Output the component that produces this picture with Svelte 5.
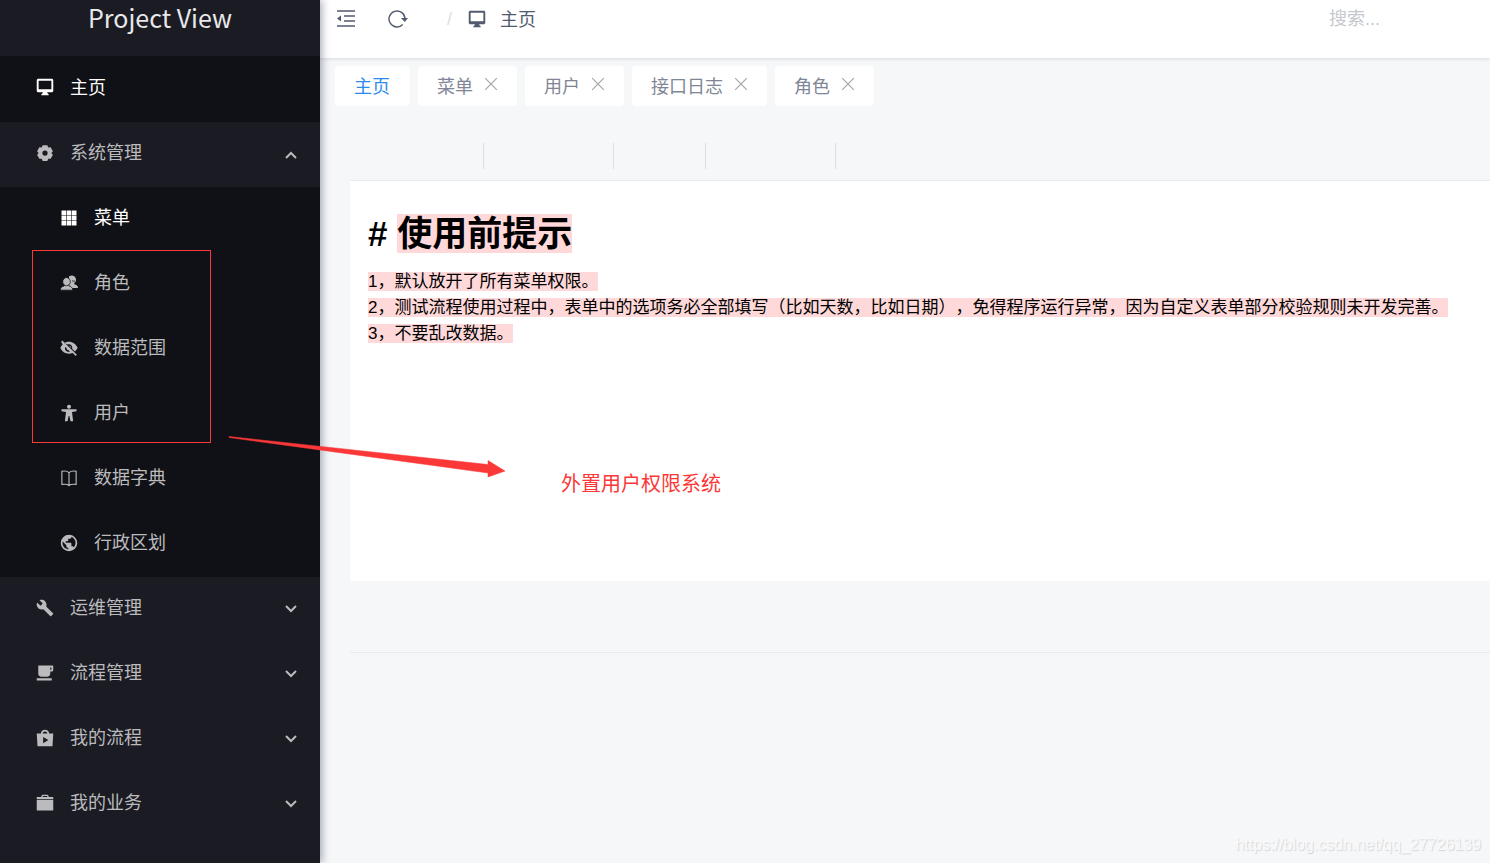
<script lang="ts">
	interface MenuItem {
		title: string;
		icon: string;
		active?: boolean;
		children?: MenuItem[];
	}

	interface Tab {
		title: string;
		closable: boolean;
	}

	const menu: MenuItem[] = [
		{
			title: '系统管理',
			icon: 'gear',
			children: [
				{ title: '菜单', icon: 'grid', active: true },
				{ title: '角色', icon: 'people' },
				{ title: '数据范围', icon: 'eyeOff' },
				{ title: '用户', icon: 'person' },
				{ title: '数据字典', icon: 'book' },
				{ title: '行政区划', icon: 'globe' }
			]
		},
		{ title: '运维管理', icon: 'wrench' },
		{ title: '流程管理', icon: 'cup' },
		{ title: '我的流程', icon: 'bag' },
		{ title: '我的业务', icon: 'briefcase' }
	];

	const icons: Record<string, string> = {
		monitor: 'M21 1H3C1.9 1 1 1.9 1 3v14c0 1.1.9 2 2 2h6v1l-2 2v1h10v-1l-2-2v-1h6c1.1 0 2-.9 2-2V3c0-1.1-.9-2-2-2zM3.500 3.500h17v11.500h-17z',
		gear: 'M9 1.500h6l1.500 3 3-.3 3 5.300-2 2.500 2 2.500-3 5.300-3-.3-1.500 3H9l-1.500-3-3 .3-3-5.300 2-2.500-2-2.500 3-5.300 3 .3zM12 8.500a3.500 3.500 0 1 0 0 7 3.500 3.500 0 0 0 0-7z',
		grid: 'M2 2h6v6H2zM8.800 2h6.400v6H8.800zM16 2h6v6h-6zM2 8.800h6v6.400H2zM8.800 8.800h6.400v6.400H8.800zM16 8.800h6v6.400h-6zM2 16h6v6H2zM8.800 16h6.400v6H8.800zM16 16h6v6h-6z',
		eyeOff: 'M5.500 5.300C8 3.800 10 3.500 12 3.500c5 0 9.500 3.500 11.500 8-.8 2-2 3.700-3.700 5l-3.600-3.600c1-4-2.700-6.700-5.700-5.700zM1.500 3.500L3 2l19.500 19L21 22.500l-4-3.700c-7 2.500-14 0-16.500-7 .7-1.800 1.700-3.200 3-4.500zM7 10.500c-1.500 4 2.500 7.500 6.200 6.300l-1.700-1.700c-1.800 0-3-1.500-2.800-3zM12 9c2 .2 3 1.500 3 3z',
		person: 'M12 1a2.700 2.700 0 1 1 0 5.400A2.700 2.700 0 0 1 12 1zM2 7h20v2.500l-6 1L17.500 23H14l-1.500-7h-1L10 23H6.500L8 10.500l-6-1z',
		globe: 'M12 1a11 11 0 1 0 0 22 11 11 0 0 0 0-22zM11 20.500c-4.400-.5-7.700-4.200-7.700-8.700l.3-1.800L8.500 15v1.200c0 1.200 1 2.200 2.500 2.200zm7.300-2.800c-.3-.9-1.100-1.500-2.100-1.500h-1v-3.300c0-.6-.5-1.100-1.100-1.100H7.600V9.600h2.200c.6 0 1.100-.5 1.100-1.100V6.300h2.200c1.200 0 2.200-1 2.200-2.200v-.4c3.200 1.300 5.400 4.500 5.400 8.100 0 2.300-.9 4.400-2.400 5.900z',
		wrench: 'M22.700 19l-9.100-9.100c.9-2.300.4-5-1.500-6.900-2-2-5-2.400-7.400-1.300L9 6 6 9 1.600 4.700C.4 7.100.9 10.100 2.900 12.100c1.900 1.900 4.600 2.400 6.900 1.500l9.100 9.100c.4.4 1 .4 1.400 0l2.300-2.300c.5-.4.5-1.100.1-1.400z',
		cup: 'M22 2H3v11c0 2.200 1.800 4 4 4h8c2.200 0 4-1.800 4-4v-3h2c1.100 0 2-.9 2-2V3c0-.6-.4-1-1-1zm-1.500 5.500H19V4.500h1.500zM1 19h20v3H1z',
		bag: 'M6.500 6C6.500 3 9 1 12 1s5.500 2 5.500 5H23l-1 17H2L1 6zm2.500 0h6c0-1.700-1.300-2.800-3-2.800S9 4.300 9 6zM9.500 10.500v8.500l7-4.250z',
		briefcase: 'M7 4c0-1.700.9-3 2-3h6c1.100 0 2 1.300 2 3h6v2.500H1V4zm2 0h6V2.700H9zM1 7.500h22V22H1z'
	};

	let tabs = $state<Tab[]>([
		{ title: '主页', closable: false },
		{ title: '菜单', closable: true },
		{ title: '用户', closable: true },
		{ title: '接口日志', closable: true },
		{ title: '角色', closable: true }
	]);
	let current = $state('主页');
	let opened = $state<Record<string, boolean>>({ 系统管理: true });
	let keyword = $state('');

	function closeTab(title: string) {
		tabs = tabs.filter((t) => t.title !== title);
		if (current === title) current = tabs[0].title;
	}
</script>

{#snippet icon(name: string)}
	<svg class="icon" viewBox="0 0 24 24" aria-hidden="true">
		{#if name === 'people'}
			<path d="M15.500 2a5.500 5.500 0 0 1 3.500 10v1.500c3 .5 5 2 5 5H12V3z" fill="currentColor" />
			<path
				d="M8.500 4.500a5.800 5.800 0 0 1 3.500 10v1.500c3 .5 5 2.500 5 5.500H.5c0-3 2-5 5-5.500v-1.500a5.800 5.800 0 0 1 3-10z"
				fill="currentColor"
				stroke="#101116"
			/>
			<path d="M5 14.500q3.500 2.500 7 0M16 9q3 1.500 4 0" fill="none" stroke="#101116" />
		{:else if name === 'book'}
			<path
				d="M12 5v17M12 5C10 2.500 6 2.500 2.500 3v17.500c4-.5 7.500-.5 9.500 1.500 2-2 5.500-2 9.500-1.500V3c-3.500-.5-7.500-.5-9.500 2z"
				fill="none"
				stroke="currentColor"
				stroke-width="1.500"
			/>
		{:else}
			<path d={icons[name]} fill="currentColor" fill-rule="evenodd" />
		{/if}
	</svg>
{/snippet}

<div class="layout">
	<aside class="sidebar">
		<div class="logo">Project View</div>
		<nav>
			<a class="menu-item home" href="#home">
				{@render icon('monitor')}
				<span>主页</span>
			</a>
			{#each menu as item}
				<button class="menu-item" onclick={() => (opened[item.title] = !opened[item.title])}>
					{@render icon(item.icon)}
					<span>{item.title}</span>
					<svg class="chevron" viewBox="0 0 14 14" aria-hidden="true">
						<path
							d={opened[item.title] ? 'M2 12l5-5 5 5' : 'M2 5l5 5 5-5'}
							fill="none"
							stroke="currentColor"
							stroke-width="2"
						/>
					</svg>
				</button>
				{#if item.children && opened[item.title]}
					<div class="submenu">
						{#each item.children as child}
							<a class="menu-item" class:active={child.active} href="#{child.icon}">
								{@render icon(child.icon)}
								<span>{child.title}</span>
							</a>
						{/each}
					</div>
				{/if}
			{/each}
		</nav>
	</aside>

	<div class="main">
		<header class="topbar">
			<button class="tool" aria-label="折叠菜单">
				<svg viewBox="0 0 20 20" aria-hidden="true">
					<path d="M1 2h18M8 7h11M8 12h11M1 17h18" fill="none" stroke="currentColor" stroke-width="1.600" />
					<path d="M1 9.500l4-3v6z" fill="currentColor" />
				</svg>
			</button>
			<button class="tool" aria-label="刷新">
				<svg viewBox="0 0 20 20" aria-hidden="true">
					<path d="M14.800 15.500A8 8 0 1 1 17 9.500" fill="none" stroke="currentColor" stroke-width="1.400" />
					<path d="M13 9h7l-3.200 4z" fill="currentColor" />
				</svg>
			</button>
			<div class="breadcrumb">
				<span class="slash">/</span>
				<a href="#home">
					{@render icon('monitor')}
					<span class="crumb">主页</span>
				</a>
			</div>
			<input class="search" type="text" placeholder="搜索..." aria-label="搜索" bind:value={keyword} />
		</header>

		<div class="tabs">
			{#each tabs as tab}
				<div class="tab" class:active={tab.title === current}>
					<button class="tab-title" onclick={() => (current = tab.title)}>{tab.title}</button>
					{#if tab.closable}
						<button class="tab-close" aria-label="关闭{tab.title}" onclick={() => closeTab(tab.title)}>
							<svg viewBox="0 0 12 12" aria-hidden="true">
								<path d="M0 0l12 12M12 0L0 12" fill="none" stroke="currentColor" stroke-width="1.200" />
							</svg>
						</button>
					{/if}
				</div>
			{/each}
		</div>

		<main class="content">
			<div class="steps">
				<div class="step wide"></div>
				<div class="step wide"></div>
				<div class="step"></div>
				<div class="step wide"></div>
			</div>
			<section class="card">
				<h1># <mark>使用前提示</mark></h1>
				<p>
					<mark>1，默认放开了所有菜单权限。</mark><br />
					<mark>2，测试流程使用过程中，表单中的选项务必全部填写（比如天数，比如日期），免得程序运行异常，因为自定义表单部分校验规则未开发完善。</mark><br />
					<mark>3，不要乱改数据。</mark>
				</p>
			</section>
			<div class="footer-line"></div>
		</main>
	</div>

	<!-- annotations -->
	<div class="note-box"></div>
	<svg class="note-arrow" viewBox="0 0 280 44" aria-hidden="true">
		<path d="M1 5.500L260 33.500V29.500L277 40 260 46V42L1 6.500z" fill="#fb3838" stroke="#fb3838" stroke-width="0.500" />
	</svg>
	<div class="note-text">外置用户权限系统</div>
	<div class="watermark">https://blog.csdn.net/qq_27726139</div>
</div>

<style>
	:global(body) {
		background: #f5f7f9;
		font-family: "Liberation Sans", "Noto Sans CJK SC", sans-serif;
		overflow: hidden;
	}

	button,
	input {
		font: inherit;
		border: 0;
		padding: 0;
		background: none;
		color: inherit;
		outline: none;
	}

	button {
		cursor: pointer;
	}

	a {
		color: inherit;
		text-decoration: none;
	}

	svg {
		display: block;
		flex: none;
	}

	.layout {
		position: relative;
		display: flex;
		min-height: 100vh;
		font-size: 18px;
	}

	/* Sidebar */
	.sidebar {
		position: relative;
		z-index: 2;
		flex: none;
		width: 320px;
		background: #1b1b24;
		box-shadow: 2px 0 8px rgba(0, 21, 41, 0.35);
	}

	.logo {
		height: 34px;
		padding-bottom: 22px;
		line-height: 34px;
		text-align: center;
		font-family: "Noto Sans CJK SC", sans-serif;
		font-size: 25px;
		color: #e8e8e9;
	}

	.menu-item {
		box-sizing: border-box;
		display: flex;
		align-items: center;
		gap: 16px;
		width: 100%;
		height: 65px;
		padding: 0 22px 4px 36px;
		color: #bbbbbd;
		text-align: left;
	}

	.menu-item span,
	.crumb {
		padding-bottom: 3px;
	}

	.menu-item.home {
		height: 66px;
		background: #101116;
		color: #fff;
	}

	.submenu {
		background: #101116;
	}

	.submenu .menu-item {
		padding-left: 60px;
	}

	.menu-item.active {
		color: #fff;
	}

	.icon {
		width: 18px;
		height: 18px;
	}

	.chevron {
		width: 14px;
		height: 14px;
		margin-left: auto;
	}

	/* Top bar */
	.main {
		flex: 1;
		min-width: 0;
	}

	.topbar {
		display: flex;
		align-items: center;
		height: 38px;
		padding: 0 20px 20px 16px;
		background: #fff;
		box-shadow: 0 1px 4px rgba(0, 21, 41, 0.12);
		color: #515a6e;
	}

	.tool {
		margin-right: 32px;
	}

	.tool svg {
		width: 20px;
		height: 20px;
	}

	.breadcrumb {
		display: flex;
		align-items: center;
		gap: 16px;
		margin-left: 7px;
	}

	.breadcrumb a {
		display: flex;
		align-items: center;
		gap: 14px;
	}

	.slash {
		color: #dcdee2;
	}

	.search {
		width: 141px;
		margin-left: auto;
	}

	.search::placeholder {
		color: #c5c8ce;
		opacity: 1;
	}

	/* Tabs */
	.tabs {
		display: flex;
		gap: 8px;
		padding: 8px 15px 0;
	}

	.tab {
		display: flex;
		align-items: center;
		gap: 12px;
		height: 40px;
		padding: 0 20px 0 19px;
		border-radius: 4px;
		background: #fff;
		color: #808695;
	}

	.tab.active {
		color: #2d8cf0;
	}

	.tab-title {
		padding-bottom: 3px;
	}

	.tab-close {
		padding-bottom: 4px;
		color: #a6a6a6;
	}

	.tab-close svg {
		width: 12px;
		height: 12px;
	}

	/* Content */
	.content {
		padding: 37px 0 0 30px;
	}

	.steps {
		display: flex;
		height: 26px;
		padding-bottom: 11px;
		border-bottom: 1px solid #e8eaec;
	}

	.step {
		width: 91px;
		border-right: 1px solid #dcdee2;
	}

	.step.wide {
		width: 129px;
	}

	.step:first-child {
		padding-left: 4px;
	}

	.card {
		box-sizing: border-box;
		min-height: 400px;
		padding: 28px 0 0 18px;
		background: #fff;
		color: #000;
		text-spacing-trim: space-all;
	}

	h1 {
		margin: 0;
		font-size: 35px;
		line-height: 50px;
	}

	p {
		margin: 10px 0 0;
		font-size: 17px;
		line-height: 26px;
	}

	mark {
		background: #ffd9d9;
		color: inherit;
	}

	.footer-line {
		padding-top: 71px;
		border-bottom: 1px solid #e8eaec;
	}

	/* Annotations over the page */
	.note-box {
		position: absolute;
		z-index: 3;
		box-sizing: border-box;
		left: 32px;
		top: 250px;
		width: 179px;
		height: 193px;
		border: 1px solid #fb3838;
	}

	.note-arrow {
		position: absolute;
		z-index: 3;
		left: 228px;
		top: 431px;
		width: 280px;
		height: 44px;
		overflow: visible;
	}

	.note-text {
		position: absolute;
		z-index: 3;
		left: 561px;
		top: 469px;
		font-size: 20px;
		line-height: 30px;
		color: #fb3838;
	}

	.watermark {
		position: absolute;
		right: 9px;
		bottom: 8px;
		font-size: 16px;
		line-height: 20px;
		color: #f9fafb;
		text-shadow: 1px 1px 1px #d4d5d7;
	}
</style>
